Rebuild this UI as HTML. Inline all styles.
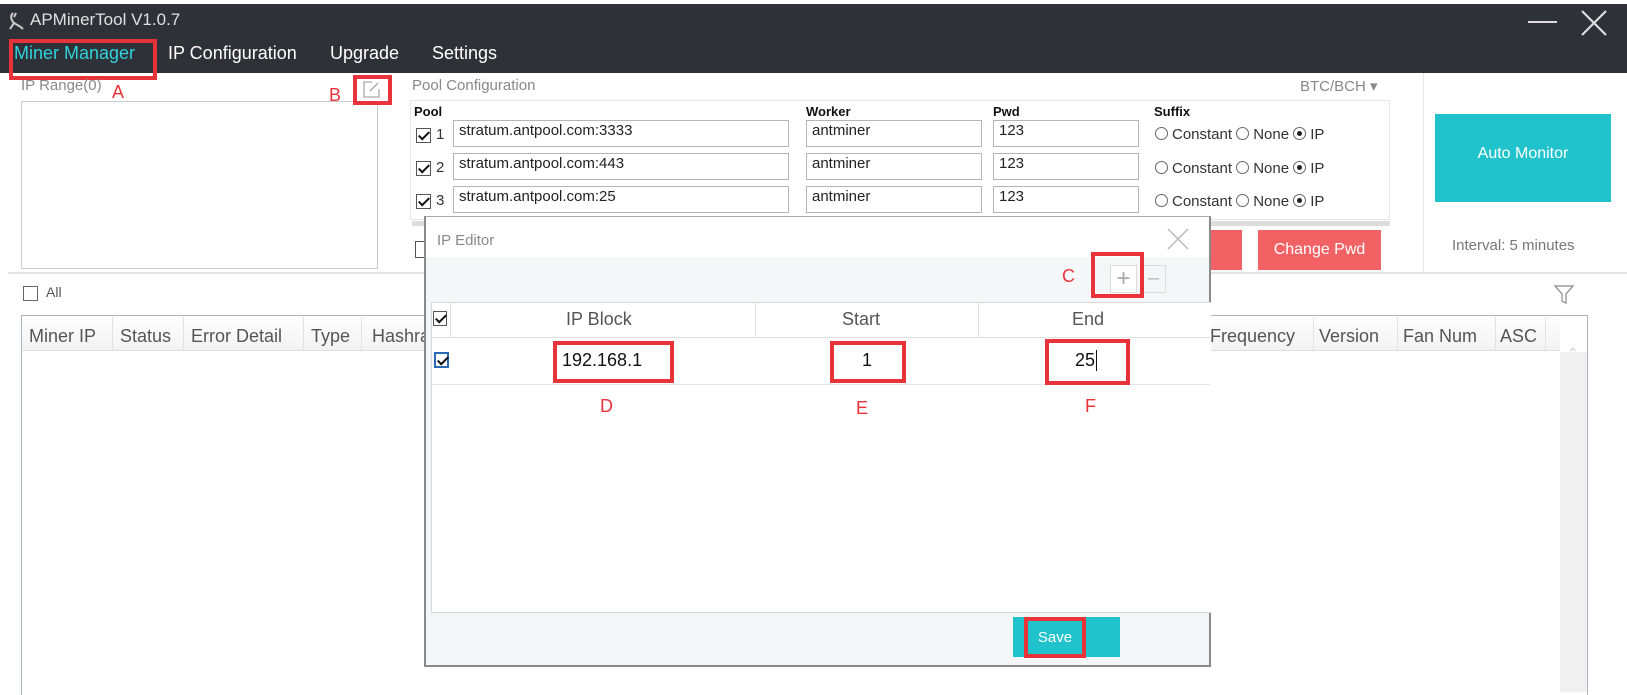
<!DOCTYPE html>
<html><head><meta charset="utf-8"><style>
*{box-sizing:border-box;margin:0;padding:0}
body{width:1627px;height:690px;position:relative;overflow:hidden;background:#fff;font-family:"Liberation Sans",sans-serif;color:#333}
.a{position:absolute}
.t{position:absolute;white-space:nowrap}
.red{border:4px solid #e8333a}
.rl{color:#e8333a;font-size:18px}
.inp{position:absolute;border:1px solid #b5b5b5;background:#fff;font-size:15px;padding:1px 5px;color:#222}
.cb{position:absolute;width:15px;height:15px;border:1px solid #555;background:#fff}
.cb.k::after{content:"";position:absolute;left:4px;top:0px;width:4px;height:9px;border:solid #111;border-width:0 2px 2px 0;transform:rotate(45deg)}
.rad{display:inline-block;width:13px;height:13px;border:1px solid #666;border-radius:50%;vertical-align:-1px;margin-right:4px;position:relative}
.rad.on::after{content:"";position:absolute;left:3px;top:3px;width:5px;height:5px;border-radius:50%;background:#222}
.sfx{position:absolute;font-size:15px;color:#333}
.hd{position:absolute;font-size:18px;color:#555;top:8px}
</style></head><body>
<!-- title bar -->
<div class="a" style="left:0;top:4px;width:1627px;height:69px;background:#2e3138"></div>
<svg class="a" style="left:7px;top:11px" width="18" height="20"><path d="M6 2C3 5 4 9 7 12L3 18M7 12C10 14 13 15 16 18M9 2L7 6" fill="none" stroke="#ccc" stroke-width="2"/></svg>
<div class="t" style="left:30px;top:10px;font-size:17px;color:#e0e0e0">APMinerTool V1.0.7</div>
<div class="a" style="left:1528px;top:21px;width:29px;height:2px;background:#ddd"></div>
<svg class="a" style="left:1580px;top:9px" width="28" height="28"><path d="M2 2L26 26M26 2L2 26" stroke="#ddd" stroke-width="2.2"/></svg>
<div class="t" style="left:14px;top:43px;font-size:18px;color:#2fd3dc">Miner Manager</div>
<div class="t" style="left:168px;top:43px;font-size:18px;color:#fff">IP Configuration</div>
<div class="t" style="left:330px;top:43px;font-size:18px;color:#fff">Upgrade</div>
<div class="t" style="left:432px;top:43px;font-size:18px;color:#fff">Settings</div>
<div class="a red" style="left:9px;top:39px;width:148px;height:41px"></div>
<!-- IP range -->
<div class="t" style="left:21px;top:77px;font-size:15px;color:#888">IP Range(0)</div>
<div class="t rl" style="left:112px;top:82px">A</div>
<div class="t rl" style="left:329px;top:85px">B</div>
<div class="a" style="left:21px;top:101px;width:357px;height:168px;border:1px solid #ccc"></div>
<div class="a red" style="left:353px;top:75px;width:39px;height:30px"></div>
<svg class="a" style="left:362px;top:80px" width="20" height="20"><path d="M10 2H2V17H17V9" fill="none" stroke="#aaa" stroke-width="1.3"/><path d="M8 11L16 3" stroke="#aaa" stroke-width="1.3"/></svg>
<!-- pool config -->
<div class="t" style="left:412px;top:77px;font-size:15px;color:#888">Pool Configuration</div>
<div class="t" style="left:1300px;top:77px;font-size:15px;color:#888">BTC/BCH &#9662;</div>
<div class="a" style="left:410px;top:100px;width:980px;height:120px;border:1px solid #e6e6e6"></div>
<div class="t" style="left:414px;top:104px;font-size:13px;font-weight:bold;color:#111">Pool</div>
<div class="t" style="left:806px;top:104px;font-size:13px;font-weight:bold;color:#111">Worker</div>
<div class="t" style="left:993px;top:104px;font-size:13px;font-weight:bold;color:#111">Pwd</div>
<div class="t" style="left:1154px;top:104px;font-size:13px;font-weight:bold;color:#111">Suffix</div>

<div class="cb k" style="left:416px;top:128px"></div><div class="t" style="left:436px;top:126px;font-size:15px">1</div>
<div class="inp" style="left:453px;top:120px;width:336px;height:27px">stratum.antpool.com:3333</div>
<div class="inp" style="left:806px;top:120px;width:176px;height:27px">antminer</div>
<div class="inp" style="left:993px;top:120px;width:146px;height:27px">123</div>
<div class="sfx" style="left:1155px;top:126px"><span class="rad"></span>Constant <span class="rad"></span>None <span class="rad on"></span>IP</div>

<div class="cb k" style="left:416px;top:161px"></div><div class="t" style="left:436px;top:159px;font-size:15px">2</div>
<div class="inp" style="left:453px;top:153px;width:336px;height:27px">stratum.antpool.com:443</div>
<div class="inp" style="left:806px;top:153px;width:176px;height:27px">antminer</div>
<div class="inp" style="left:993px;top:153px;width:146px;height:27px">123</div>
<div class="sfx" style="left:1155px;top:160px"><span class="rad"></span>Constant <span class="rad"></span>None <span class="rad on"></span>IP</div>

<div class="cb k" style="left:416px;top:194px"></div><div class="t" style="left:436px;top:192px;font-size:15px">3</div>
<div class="inp" style="left:453px;top:186px;width:336px;height:27px">stratum.antpool.com:25</div>
<div class="inp" style="left:806px;top:186px;width:176px;height:27px">antminer</div>
<div class="inp" style="left:993px;top:186px;width:146px;height:27px">123</div>
<div class="sfx" style="left:1155px;top:193px"><span class="rad"></span>Constant <span class="rad"></span>None <span class="rad on"></span>IP</div>

<div class="a" style="left:412px;top:221px;width:978px;height:5px;background:#ddd"></div>
<div class="a" style="left:415px;top:241px;width:15px;height:17px;border:1px solid #555"></div>
<div class="a" style="left:1192px;top:230px;width:50px;height:40px;background:#f26265"></div>
<div class="a" style="left:1258px;top:230px;width:123px;height:40px;background:#f26265;color:#fff;font-size:16px;text-align:center;line-height:40px">Change Pwd</div>
<!-- right panel -->
<div class="a" style="left:1423px;top:73px;width:1px;height:199px;background:#e6e6e6"></div>
<div class="a" style="left:1435px;top:114px;width:176px;height:88px;background:#20c2cc;color:#fff;font-size:16px;text-align:center;line-height:80px">Auto Monitor</div>
<div class="t" style="left:1452px;top:237px;font-size:15px;color:#777">Interval: 5 minutes</div>
<div class="a" style="left:8px;top:272px;width:1619px;height:2px;background:#e3e3e3"></div>
<!-- lower -->
<div class="a" style="left:23px;top:286px;width:15px;height:15px;border:1px solid #666"></div>
<div class="t" style="left:46px;top:284px;font-size:14px;color:#555">All</div>
<svg class="a" style="left:1553px;top:283px" width="22" height="22"><path d="M2 3H20L13 11V20L9 18V11Z" fill="none" stroke="#888" stroke-width="1.2"/></svg>
<div class="a" style="left:21px;top:315px;width:1567px;height:380px;border:1px solid #a9b6c6;border-bottom:none"></div>
<div class="a" style="left:22px;top:316px;width:1538px;height:35px;background:linear-gradient(#fff,#f2f2f2);border-bottom:1px solid #e0e0e0"></div>
<div class="a" style="left:1560px;top:352px;width:27px;height:340px;background:#f0f0f0"></div>
<div class="t" style="left:1567px;top:345px;font-size:14px;color:#ccc">&#8963;</div>
<div class="hd" style="left:29px;top:326px">Miner IP</div>
<div class="a" style="left:112px;top:317px;width:1px;height:34px;background:#e2e2e2"></div>
<div class="hd" style="left:120px;top:326px">Status</div>
<div class="a" style="left:183px;top:317px;width:1px;height:34px;background:#e2e2e2"></div>
<div class="hd" style="left:191px;top:326px">Error Detail</div>
<div class="a" style="left:303px;top:317px;width:1px;height:34px;background:#e2e2e2"></div>
<div class="hd" style="left:311px;top:326px">Type</div>
<div class="a" style="left:361px;top:317px;width:1px;height:34px;background:#e2e2e2"></div>
<div class="hd" style="left:372px;top:326px">Hashrate</div>
<div class="hd" style="left:1210px;top:326px">Frequency</div>
<div class="a" style="left:1313px;top:317px;width:1px;height:34px;background:#e2e2e2"></div>
<div class="hd" style="left:1319px;top:326px">Version</div>
<div class="a" style="left:1397px;top:317px;width:1px;height:34px;background:#e2e2e2"></div>
<div class="hd" style="left:1403px;top:326px">Fan Num</div>
<div class="a" style="left:1495px;top:317px;width:1px;height:34px;background:#e2e2e2"></div>
<div class="hd" style="left:1500px;top:326px">ASC</div>
<div class="a" style="left:1545px;top:317px;width:1px;height:34px;background:#e2e2e2"></div>
<!-- dialog -->
<div class="a" style="left:424px;top:216px;width:787px;height:451px;background:#f5f6f8;border:2px solid #8a8a8a;border-top:1px solid #aaa"></div>
<div class="a" style="left:426px;top:217px;width:783px;height:40px;background:#fff"></div>
<div class="t" style="left:437px;top:232px;font-size:15px;color:#888">IP Editor</div>
<svg class="a" style="left:1167px;top:228px" width="22" height="22"><path d="M1 1L21 21M21 1L1 21" stroke="#bbb" stroke-width="1.5"/></svg>
<div class="t rl" style="left:1062px;top:266px">C</div>
<div class="a" style="left:1110px;top:265px;width:27px;height:28px;border:1px solid #ddd;background:#fff;color:#aaa;font-size:24px;text-align:center;line-height:25px">+</div>
<div class="a" style="left:1141px;top:265px;width:25px;height:28px;border:1px solid #ddd;color:#bbb;font-size:20px;text-align:center;line-height:25px">&#8211;</div>
<div class="a red" style="left:1091px;top:252px;width:53px;height:46px"></div>
<div class="a" style="left:431px;top:302px;width:780px;height:311px;background:#fff;border:1px solid #d8d8d8;border-right:none"></div>
<div class="a" style="left:432px;top:337px;width:778px;height:1px;background:#e0e0e0"></div>
<div class="a" style="left:432px;top:384px;width:778px;height:1px;background:#e6e6e6"></div>
<div class="a" style="left:450px;top:303px;width:1px;height:34px;background:#e0e0e0"></div>
<div class="a" style="left:755px;top:303px;width:1px;height:34px;background:#e0e0e0"></div>
<div class="a" style="left:978px;top:303px;width:1px;height:34px;background:#e0e0e0"></div>
<div class="cb k" style="left:433px;top:311px;width:14px;height:15px"></div>
<div class="t" style="left:566px;top:309px;font-size:18px;color:#555">IP Block</div>
<div class="t" style="left:842px;top:309px;font-size:18px;color:#555">Start</div>
<div class="t" style="left:1072px;top:309px;font-size:18px;color:#555">End</div>
<div class="cb k" style="left:434px;top:352px;width:15px;height:16px;border:2px solid #2a6ab5"></div>
<div class="a red" style="left:553px;top:341px;width:121px;height:42px"></div>
<div class="t" style="left:562px;top:350px;font-size:18px;color:#111">192.168.1</div>
<div class="a red" style="left:830px;top:341px;width:76px;height:42px"></div>
<div class="t" style="left:862px;top:350px;font-size:18px;color:#111">1</div>
<div class="a red" style="left:1045px;top:339px;width:85px;height:46px"></div>
<div class="t" style="left:1075px;top:350px;font-size:18px;color:#111">25</div>
<div class="a" style="left:1096px;top:350px;width:1px;height:21px;background:#111"></div>
<div class="t rl" style="left:600px;top:396px">D</div>
<div class="t rl" style="left:856px;top:398px">E</div>
<div class="t rl" style="left:1085px;top:396px">F</div>
<div class="a" style="left:1013px;top:617px;width:107px;height:40px;background:#20c2cc"></div>
<div class="a red" style="left:1024px;top:617px;width:62px;height:41px;background:#20c2cc;color:#fff;font-size:15px;text-align:center;line-height:33px">Save</div>
</body></html>
